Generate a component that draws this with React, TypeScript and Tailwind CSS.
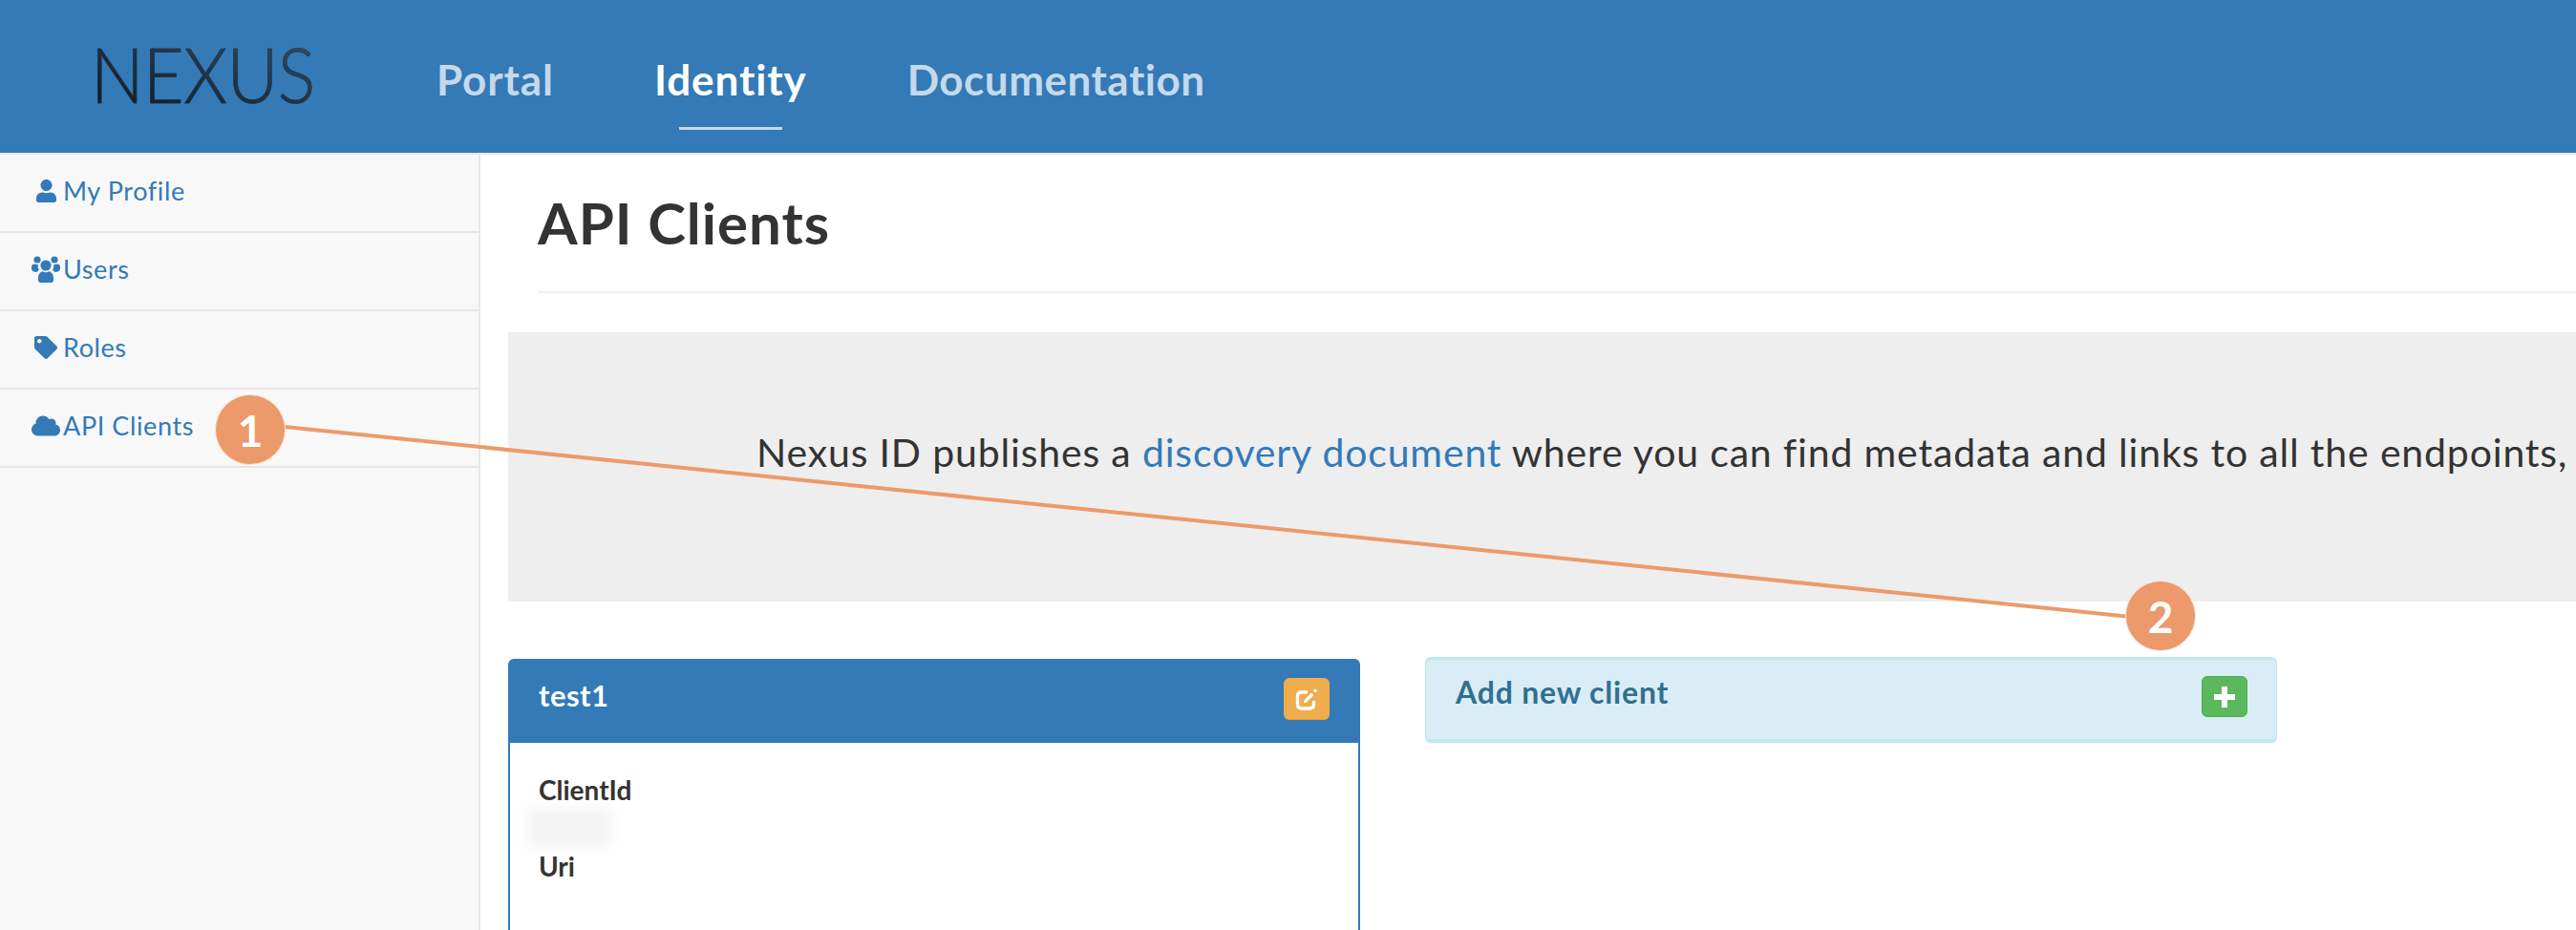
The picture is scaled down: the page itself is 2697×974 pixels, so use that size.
import { FaCloud, FaTag, FaUser } from "react-icons/fa";

const UsersIcon = () => (
  <svg viewBox="0 0 30 28" className="w-[30px] h-[28px] fill-[#337ab7]">
    <circle cx="6" cy="4" r="3.6" />
    <circle cx="24" cy="4" r="3.6" />
    <path d="M0 11.5C0 9 2 8.4 3.5 8.4L7 9.2C6.4 11 6.8 13 8 14.5L5.5 17C2 17 0 15.5 0 13.5Z" />
    <path d="M30 11.5C30 9 28 8.4 26.5 8.4L23 9.2C23.6 11 23.2 13 22 14.5L24.5 17C28 17 30 15.5 30 13.5Z" />
    <circle cx="15" cy="10" r="5.6" />
    <path d="M7 23C7 19 9.5 16.6 11.5 16.2C13.5 17.6 16.5 17.6 18.5 16.2C20.5 16.6 23 19 23 23V25.5C23 27 22 28 20.5 28H9.5C8 28 7 27 7 25.5Z" />
  </svg>
);

const EditIcon = () => (
  <svg viewBox="0 0 26 26" className="w-[26px] h-[26px]" fill="none" stroke="white">
    <path d="M20.5 15V19C20.5 21.5 19 23 16.5 23H7.5C5 23 3.5 21.5 3.5 19V10C3.5 7.5 5 6 7.5 6H14" strokeWidth="3.4" />
    <path d="M10.5 17L11.5 13.5L18 7L20 9L13.5 15.5Z" fill="white" strokeWidth="1" />
    <circle cx="22" cy="4.5" r="1.8" fill="white" strokeWidth="0" />
  </svg>
);

const PlusIcon = () => (
  <svg viewBox="0 0 22 22" className="w-[22px] h-[22px] fill-white">
    <rect x="8" y="0" width="6" height="22" />
    <rect x="0" y="8" width="22" height="6" />
  </svg>
);

const menu = [
  { label: "My Profile", icon: <FaUser className="w-[21px] h-[24px]" /> },
  { label: "Users", icon: <UsersIcon /> },
  { label: "Roles", icon: <FaTag className="w-[24px] h-[24px]" /> },
  { label: "API Clients", icon: <FaCloud className="w-[30px] h-[26px]" /> },
];

const Marker = ({ n, className }: { n: number; className: string }) => (
  <div
    className={`absolute w-[74px] h-[74px] rounded-full bg-[#ec9a6b] border border-white/70 flex items-center justify-center text-white text-[46px] font-bold ${className}`}
  >
    {n}
  </div>
);

export default function App() {
  return (
    <div className="relative h-[974px] w-full overflow-hidden bg-white font-['Lato',sans-serif] text-[#333]">
      <div className="h-[162px] bg-[#337ab7] border-b-2 border-[#e7e7e7] flex items-center">
        <div className="ml-[95px] w-[362px] pb-[6px]">
          <div className="w-fit origin-left scale-x-[0.92] text-[80px] leading-none font-light tracking-[-0.5px] [-webkit-text-stroke:0.7px_#22364a] bg-gradient-to-tr from-[#0b1620] to-[#3a5068] bg-clip-text text-transparent">
            NEXUS
          </div>
        </div>
        <nav className="flex items-center gap-[105px] pt-[6px] text-[44px] font-bold tracking-[0.9px]">
          <a className="text-[#c5d9ea]">Portal</a>
          <a className="relative text-white">
            Identity
            <span className="absolute left-[26px] right-[26px] -bottom-[20px] h-[3px] bg-[#c5d9ea]"></span>
          </a>
          <a className="text-[#c5d9ea] tracking-[0.5px]">Documentation</a>
        </nav>
      </div>

      <div className="flex h-[812px]">
        <aside className="w-[503px] shrink-0 bg-[#f8f8f8] border-r-2 border-[#e7e7e7]">
          {menu.map((item) => (
            <div
              key={item.label}
              className="h-[82px] border-b-2 border-[#e7e7e7] flex items-center pl-[33px] pb-[4px] text-[#337ab7] text-[27px] tracking-[0.6px]"
            >
              <span className="w-[30px] flex justify-center">{item.icon}</span>
              <span className="ml-[3px]">{item.label}</span>
            </div>
          ))}
        </aside>

        <main className="flex-1 min-w-0 pl-[29px]">
          <div className="ml-[31px] h-[145px] border-b-2 border-[#eee] flex items-center">
            <h1 className="text-[60px] font-bold leading-none pb-[2px] tracking-[1px]">API Clients</h1>
          </div>

          <div className="mt-[41px] h-[282px] bg-[#eee] pl-[260px] pt-[101px] whitespace-nowrap overflow-hidden text-[41px] leading-[50px] tracking-[0.83px]">
            Nexus ID publishes a <a className="text-[#337ab7]">discovery document</a> where you can find metadata and links to all the endpoints, like
          </div>

          <div className="mt-[58px] flex items-start gap-[68px]">
            <div className="mt-[2px] w-[892px] h-[400px] rounded-t-[6px] border-2 border-[#337ab7]">
              <div className="h-[86px] bg-[#337ab7] flex items-start justify-between pl-[30px] pr-[30px] pt-[18px] text-white text-[31px] font-bold leading-[36px] tracking-[0.5px]">
                <span>test1</span>
                <button className="w-[48px] h-[44px] rounded-[6px] bg-[#f0ad4e] border-b border-[#eea236] flex items-center justify-center">
                  <EditIcon />
                </button>
              </div>
              <div className="pl-[30px] pt-[29px] text-[28px] leading-[40px] font-bold">
                <div>ClientId</div>
                <div className="-ml-[11px] h-[40px] w-[86px] bg-[#f3f3f3] blur-[6px]"></div>
                <div>Uri</div>
              </div>
            </div>

            <div className="w-[892px] h-[90px] rounded-[6px] bg-[#d9edf7] border border-[#bce8f1] border-t-[3px] border-b-[4px] shadow-[0_1px_2px_rgba(0,0,0,0.05)] flex items-start justify-between pl-[31px] pr-[30px] pt-[16px] text-[#31708f] text-[32px] font-bold leading-[36px] tracking-[0.8px]">
              <span>Add new client</span>
              <button className="mt-[1px] w-[48px] h-[43px] rounded-[6px] bg-[#5cb85c] border border-[#4cae4c] flex items-center justify-center">
                <PlusIcon />
              </button>
            </div>
          </div>
        </main>
      </div>

      <svg className="absolute inset-0 w-[2697px] h-[974px] pointer-events-none" viewBox="0 0 2697 974">
        <line x1="298" y1="447" x2="2226" y2="645.5" stroke="#ec9a6b" strokeWidth="4" />
      </svg>
      <Marker n={1} className="left-[225px] top-[413px]" />
      <Marker n={2} className="left-[2225px] top-[608px]" />
    </div>
  );
}
